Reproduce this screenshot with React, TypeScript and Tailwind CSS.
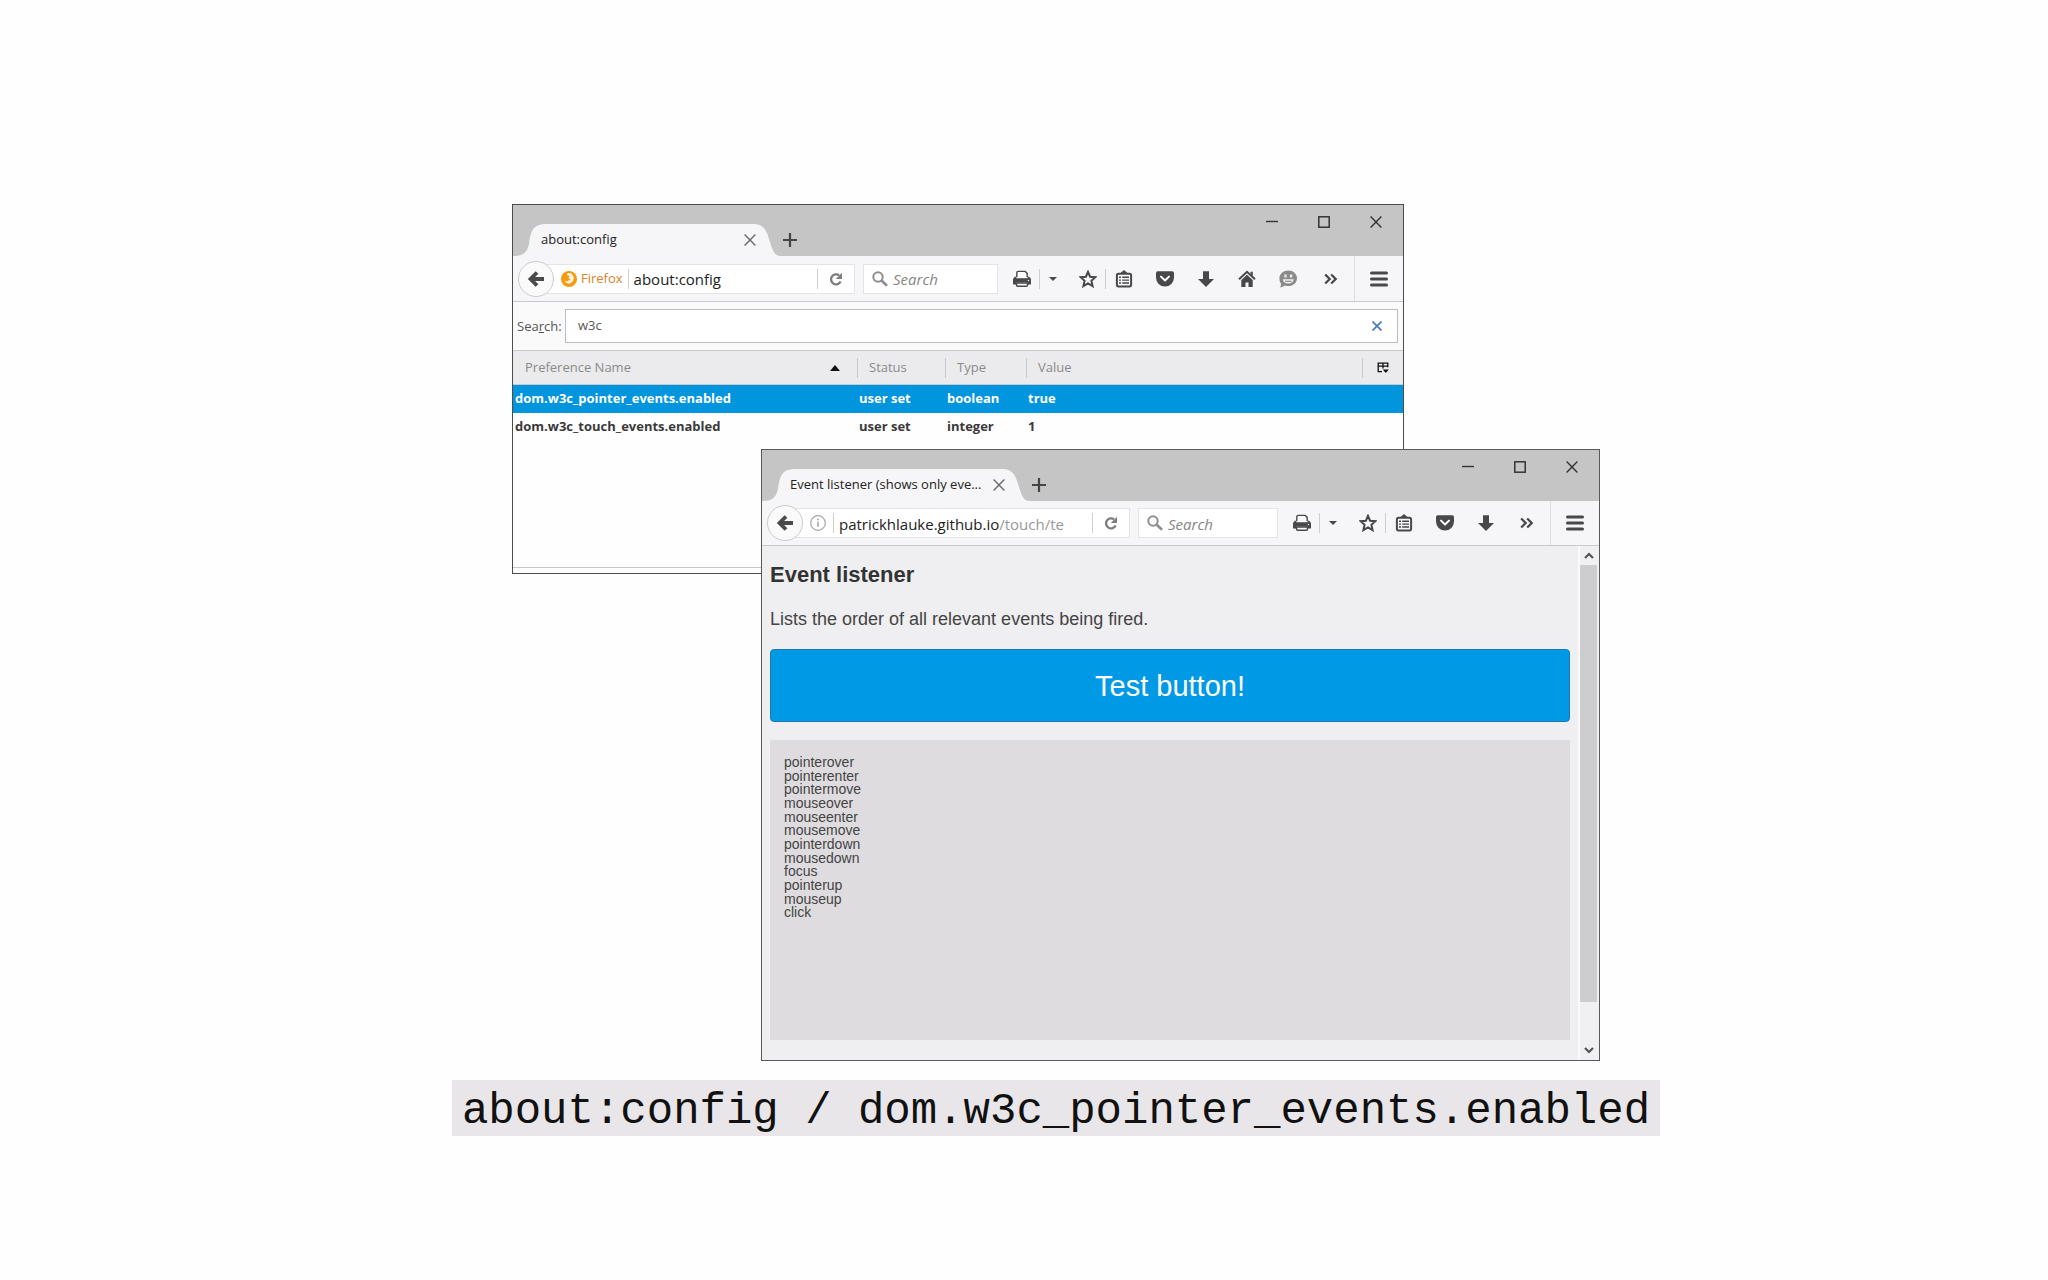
import type { ReactNode } from "react";
import clsx from "clsx";

const events = [
  "pointerover",
  "pointerenter",
  "pointermove",
  "mouseover",
  "mouseenter",
  "mousemove",
  "pointerdown",
  "mousedown",
  "focus",
  "pointerup",
  "mouseup",
  "click",
];

const prefs = [
  { name: "dom.w3c_pointer_events.enabled", status: "user set", type: "boolean", value: "true", selected: true },
  { name: "dom.w3c_touch_events.enabled", status: "user set", type: "integer", value: "1", selected: false },
];

function Svg({ size = 18, box = 18, children }: { size?: number; box?: number; children: ReactNode }) {
  return (
    <svg width={size} height={size} viewBox={`0 0 ${box} ${box}`} fill="none" aria-hidden="true" className="shrink-0">
      {children}
    </svg>
  );
}

const CloseIcon = ({ size = 12, stroke = 1.4 }: { size?: number; stroke?: number }) => (
  <Svg size={size} box={12}>
    <path d="M.6.6l10.8 10.8M11.4.6L.6 11.4" stroke="currentColor" strokeWidth={stroke} />
  </Svg>
);

const PrinterIcon = () => (
  <Svg>
    <path d="M3.8 7V2.8Q3.800 1.400 5.200 1.400h7l2 2V7" fill="#fafafa" stroke="currentColor" strokeWidth="1.4" />
    <path d="M1.8 6.800h1.600v1.400h11.200V6.800h1.600L18 9v5.600h-3v-2H3v2H0V9z" fill="currentColor" />
    <path d="M3.5 13h11v2q0 1.300-1.300 1.300H4.800q-1.300 0-1.300-1.300z" fill="#fafafa" stroke="currentColor" strokeWidth="1.5" />
    <circle cx="15.5" cy="10.5" r=".7" fill="#fff" />
  </Svg>
);

const StarIcon = () => (
  <Svg>
    <path
      d="M9 1.800l2.100 4.900 5.300.5-4 3.600 1.200 5.300L9 13.300l-4.600 2.800 1.200-5.300-4-3.600 5.300-.5z"
      stroke="currentColor"
      strokeWidth="2"
    />
  </Svg>
);

const BookmarksIcon = () => (
  <Svg>
    <rect x="1.9" y="3.7" width="14.2" height="12.7" rx="1.6" stroke="currentColor" strokeWidth="2" />
    <path d="M5 3.500L9 0l4 3.500z" fill="currentColor" />
    <path d="M4 7.200h2m1.200 0H14M4 10.100h2m1.200 0H14M4 13h2m1.200 0H14" stroke="currentColor" strokeWidth="1.4" />
  </Svg>
);

const PocketIcon = () => (
  <Svg>
    <path d="M1.800 1.200h14.400q1.800 0 1.800 1.800v4.600a9 9 0 0 1-18 0V3q0-1.800 1.800-1.800z" fill="currentColor" />
    <path d="M5 6.600l4 3.900 4-3.900" stroke="#fff" strokeWidth="2" strokeLinecap="round" strokeLinejoin="round" />
  </Svg>
);

const DownloadIcon = () => (
  <Svg>
    <path d="M6 1.200h6V9h5l-8 8-8-8h5z" fill="currentColor" />
  </Svg>
);

const HomeIcon = () => (
  <Svg>
    <path d="M1 9.300l8-7.500 8 7.500" stroke="currentColor" strokeWidth="2" />
    <path d="M12.500 1.800h2.300v4.300l-2.300-2z" fill="currentColor" />
    <path d="M3.300 10L9 4.800l5.700 5.200v7H10.500v-4.500h-3V17H3.300z" fill="currentColor" />
  </Svg>
);

const ChatIcon = () => (
  <Svg>
    <path d="M9.300.5C14.200.5 18 3.900 18 8.300s-3.800 7.800-8.700 7.800c-1.300 0-2.500-.2-3.600-.7C4.500 16.500 3 17.300.6 17.300c1-.9 1.500-2 1.500-3.400C1 12.500.4 10.500.4 8.300.4 3.900 4.400.5 9.300.5z" fill="#8a8a8a" />
    <path d="M5.300 6h2.400M10.900 6h2.400" stroke="#e8e8e8" strokeWidth="2.8" />
    <path d="M3.800 9.200h11c-.4 2.700-2.600 4.300-5.500 4.300s-5.100-1.600-5.500-4.300z" fill="#f4f4f4" />
    <path d="M6 11.300h6.600" stroke="#8a8a8a" strokeWidth="1.2" />
  </Svg>
);

const OverflowIcon = () => (
  <Svg>
    <path d="M3.200 4.500L7.700 9l-4.500 4.500M9.200 4.500l4.500 4.500-4.500 4.500" stroke="currentColor" strokeWidth="2.3" />
  </Svg>
);

const MenuIcon = () => (
  <Svg>
    <path d="M1.500 3h15M1.500 9h15M1.500 15h15" stroke="currentColor" strokeWidth="3" strokeLinecap="round" />
  </Svg>
);

const BackIcon = () => (
  <Svg>
    <path d="M17 9H4M10 2.500L3.500 9l6.500 6.500" stroke="#4a4a4c" strokeWidth="3.8" />
  </Svg>
);

const ReloadIcon = () => (
  <Svg size={14} box={14}>
    <path d="M10 3.300A5 5 0 1 0 11.600 9.600" stroke="#7d7d7f" strokeWidth="2.3" />
    <path d="M13 .8v6.200H6.800z" fill="#7d7d7f" />
  </Svg>
);

const MagnifierIcon = () => (
  <Svg size={16} box={16}>
    <circle cx="6" cy="6" r="4.7" stroke="#8f8f90" strokeWidth="2" />
    <path d="M9.500 9.500l5.500 5.300" stroke="#8f8f90" strokeWidth="2.6" />
  </Svg>
);

const FirefoxIcon = () => (
  <Svg size={16} box={16}>
    <circle cx="8" cy="8" r="8" fill="#f79a12" />
    <path d="M6.200 2.200c3.400-1 6.400 1.300 6.500 4.800.1 3.300-2.300 5.600-5 5.500-2.200-.1-3.700-1.400-4-3 1 .9 2.500 1 3.600.2 1-.6 1.700-.5 1.900-1.100.2-.7-.7-1.200-1.700-1.100-.1-1 .5-1.500 1.300-1.900-.5-.9-1.400-1.200-2.600-1z" fill="#fff3dc" />
  </Svg>
);

const InfoIcon = () => (
  <Svg size={16} box={16}>
    <circle cx="8" cy="8" r="7.3" stroke="#a5a5a6" strokeWidth="1.2" />
    <path d="M8 6.800v5" stroke="#a5a5a6" strokeWidth="1.6" />
    <circle cx="8" cy="4.5" r="1" fill="#a5a5a6" />
  </Svg>
);

const ColumnPickerIcon = () => (
  <Svg size={12} box={12}>
    <path d="M5 9.700H1.200V1.200h9.600v4M1.200 4.200h9.600M6 1v5.500" stroke="#111" strokeWidth="1.3" />
    <path d="M5.800 7.500h6L8.800 11z" fill="#111" />
  </Svg>
);

const Divider = () => <span className="h-5 w-px shrink-0 bg-[#cfced0]" />;

function ToolButton({ label, className, children }: { label: string; className?: string; children: ReactNode }) {
  return (
    <button type="button" aria-label={label} className={clsx("flex h-7 shrink-0 items-center justify-center", className)}>
      {children}
    </button>
  );
}

function TitleBar({ title }: { title: string }) {
  return (
    <div className="flex h-[51px] items-start justify-between bg-[#c6c5c6]">
      <div className="flex h-full items-end">
        <div className="relative flex h-8 w-[268px] items-center pr-[25px] pl-7">
          <svg className="absolute inset-0" width="268" height="32" viewBox="0 0 268 32" aria-hidden="true">
            <path d="M0 32C10 32 14 29 16 20C18 6 20 0 34 0H240C252 0 254 8 257 18C260 28 262 32 268 32z" fill="#f6f5f7" />
          </svg>
          <span className="relative flex-1 text-[13px] whitespace-nowrap text-[#222]">{title}</span>
          <button type="button" aria-label="Close tab" className="relative text-[#6a6a6a]">
            <CloseIcon />
          </button>
        </div>
        <button type="button" aria-label="New tab" className="mb-[9px] ml-[2px] text-[#444]">
          <Svg size={14} box={14}>
            <path d="M7 0v14M0 7h14" stroke="currentColor" strokeWidth="2.2" />
          </Svg>
        </button>
      </div>
      <div className="flex pt-[3px] pr-px text-[#333]">
        <ToolButton label="Minimize" className="w-13">
          <Svg size={12} box={12}>
            <path d="M0 5.500h12" stroke="currentColor" strokeWidth="1.4" />
          </Svg>
        </ToolButton>
        <ToolButton label="Maximize" className="w-13">
          <Svg size={12} box={12}>
            <rect x=".8" y=".8" width="10.4" height="10.4" stroke="currentColor" strokeWidth="1.5" />
          </Svg>
        </ToolButton>
        <ToolButton label="Close window" className="w-13">
          <CloseIcon />
        </ToolButton>
      </div>
    </div>
  );
}

type ToolbarProps = {
  identity: ReactNode;
  host: string;
  path?: string;
  searchWidth: string;
  className: string;
  extra?: ReactNode;
};

function Toolbar({ identity, host, path, searchWidth, className, extra }: ToolbarProps) {
  return (
    <div className={clsx("flex items-center border-b border-[#c9c8ca] bg-[#f6f5f7] pl-[5px] text-[#48484a]", className)}>
      <button
        type="button"
        aria-label="Back"
        className="relative flex size-9 shrink-0 items-center justify-center rounded-full border border-[#cbcacc] bg-[#fafafb]"
      >
        <BackIcon />
      </button>
      <div className="-ml-2 flex h-[30px] min-w-0 flex-1 items-center border border-[#e4e3e5] bg-white pl-[14px]">
        {identity}
        <Divider />
        <div className="flex min-w-0 flex-1 items-center overflow-hidden pt-[2px] pl-[5px] text-[15px]">
          <input aria-label="Address" defaultValue={host} className="text-[#222] outline-none [field-sizing:content]" />
          {path && <span className="text-[#999]">{path}</span>}
        </div>
        <Divider />
        <ToolButton label="Reload" className="w-9">
          <ReloadIcon />
        </ToolButton>
      </div>
      <label className={clsx("ml-2 flex h-[30px] shrink-0 items-center gap-[5px] border border-[#e4e3e5] bg-white pl-2", searchWidth)}>
        <MagnifierIcon />
        <input
          aria-label="Web search"
          placeholder="Search"
          className="min-w-0 flex-1 pt-[2px] text-[15px] italic outline-none placeholder:text-[#858585]"
        />
      </label>
      <ToolButton label="Print" className="ml-[7px] w-[34px]">
        <PrinterIcon />
      </ToolButton>
      <Divider />
      <ToolButton label="Print options" className="w-[25px]">
        <Svg size={8} box={8}>
          <path d="M0 2h8L4 6z" fill="currentColor" />
        </Svg>
      </ToolButton>
      <ToolButton label="Bookmark this page" className="ml-[6px] w-[34px]">
        <StarIcon />
      </ToolButton>
      <Divider />
      <ToolButton label="Bookmarks" className="mr-[2px] w-9">
        <BookmarksIcon />
      </ToolButton>
      <ToolButton label="Save to Pocket" className="w-[41px]">
        <PocketIcon />
      </ToolButton>
      <ToolButton label="Downloads" className="w-[41px]">
        <DownloadIcon />
      </ToolButton>
      {extra}
      <ToolButton label="More tools" className="mr-[3px] w-[41px]">
        <OverflowIcon />
      </ToolButton>
      <div className="flex h-full border-l border-[#dddcde]">
        <button type="button" aria-label="Menu" className="flex w-12 items-center justify-center">
          <MenuIcon />
        </button>
      </div>
    </div>
  );
}

function ConfigWindow() {
  return (
    <section className="absolute top-0 left-0 flex h-[370px] w-[892px] flex-col border border-[#4c4c4c] bg-[#fefefe]">
      <TitleBar title="about:config" />
      <Toolbar
        className="h-[46px]"
        searchWidth="w-[135px]"
        host="about:config"
        identity={
          <span className="mr-[5px] flex items-center gap-1 text-[13px] text-[#d9822b]">
            <FirefoxIcon />
            Firefox
          </span>
        }
        extra={
          <>
            <ToolButton label="Home" className="w-[41px]">
              <HomeIcon />
            </ToolButton>
            <ToolButton label="Chat" className="mr-[2px] w-[41px]">
              <ChatIcon />
            </ToolButton>
          </>
        }
      />

      {/* Filter row */}
      <div className="flex h-12 items-center bg-[#fbfafb] pr-[5px] pl-1 text-[13px] text-[#555]">
        <label htmlFor="filter" className="w-12 pt-px">
          Sea<u>r</u>ch:
        </label>
        <div className="flex h-[34px] flex-1 items-center border border-[#bdbcc0] bg-white pr-[15px] pl-3">
          <input id="filter" defaultValue="w3c" className="flex-1 outline-none" />
          <button type="button" aria-label="Clear filter" className="text-[#4679bd]">
            <CloseIcon size={10} stroke={2} />
          </button>
        </div>
      </div>

      {/* Preferences */}
      <table className="w-full table-fixed border-collapse text-left text-[13px]">
        <thead>
          <tr className="h-[34px] border-y border-[#c9c8ca] bg-[#ebeaec] text-[#8a8a8a]">
            <th className="w-[345px] pl-3 font-normal">
              <div className="flex h-5 items-center justify-between border-r border-[#c9c8ca] pr-[17px]">
                Preference Name
                <Svg size={10} box={10}>
                  <path d="M0 8L5 2l5 6z" fill="#111" />
                </Svg>
              </div>
            </th>
            <th className="w-[88px] pl-[11px] font-normal">
              <div className="flex h-5 items-center border-r border-[#c9c8ca]">Status</div>
            </th>
            <th className="w-[81px] pl-[11px] font-normal">
              <div className="flex h-5 items-center border-r border-[#c9c8ca]">Type</div>
            </th>
            <th className="pl-[11px] font-normal">
              <div className="flex h-5 items-center border-r border-[#c9c8ca]">Value</div>
            </th>
            <th className="w-10">
              <button type="button" aria-label="Select columns" className="flex w-full justify-center">
                <ColumnPickerIcon />
              </button>
            </th>
          </tr>
        </thead>
        <tbody>
          {prefs.map((pref) => (
            <tr
              key={pref.name}
              className={clsx("h-7 font-bold", pref.selected ? "bg-[#0095dd] text-white" : "text-[#3a3a3a]")}
            >
              <td className="pl-[2px]">{pref.name}</td>
              <td className="pl-px">{pref.status}</td>
              <td className="pl-px">{pref.type}</td>
              <td className="pl-px" colSpan={2}>
                {pref.value}
              </td>
            </tr>
          ))}
        </tbody>
      </table>
      <div className="mt-auto mb-[5px] border-b border-[#c4c9c6]" />
    </section>
  );
}

function EventWindow() {
  return (
    <section className="absolute right-0 bottom-0 flex h-[612px] w-[839px] flex-col border border-[#5a585c] bg-[#efeef0]">
      <TitleBar title="Event listener (shows only eve..." />
      <Toolbar
        className="h-[45px]"
        searchWidth="w-[140px]"
        host="patrickhlauke.github.io"
        path="/touch/te"
        identity={
          <span className="mr-[7px]">
            <InfoIcon />
          </span>
        }
      />
      <div className="flex min-h-0 flex-1 font-['Liberation_Sans',Arial,sans-serif] text-[#444]">
        <div className="flex flex-1 flex-col px-2 pt-[15px] pb-5">
          <h1 className="text-[22px] leading-7 font-bold text-[#333]">Event listener</h1>
          <p className="mt-4 text-lg leading-7">Lists the order of all relevant events being fired.</p>
          <button
            type="button"
            className="mt-4 h-[73px] shrink-0 rounded border border-[#1a78b4] bg-[#0099e6] pt-[2px] text-[29px] text-white"
          >
            Test button!
          </button>
          <div className="mt-[18px] flex-1 bg-[#dedcdf] px-[14px] py-[15px]">
            <ul className="grid h-[164px] auto-rows-fr text-[14px] leading-none">
              {events.map((event) => (
                <li key={event}>{event}</li>
              ))}
            </ul>
          </div>
        </div>
        {/* Scrollbar */}
        <div className="flex w-[21px] flex-col border-l-2 border-[#fafafa] bg-[#f0eff1] pr-[2px] text-[#555]">
          <ToolButton label="Scroll up" className="h-[19px]!">
            <Svg size={10} box={10}>
              <path d="M1 7l4-4 4 4" stroke="currentColor" strokeWidth="2.2" />
            </Svg>
          </ToolButton>
          <div className="h-[437px] bg-[#cdccce]" />
          <ToolButton label="Scroll down" className="mt-auto h-5!">
            <Svg size={10} box={10}>
              <path d="M1 3l4 4 4-4" stroke="currentColor" strokeWidth="2.2" />
            </Svg>
          </ToolButton>
        </div>
      </div>
    </section>
  );
}

export default function App() {
  return (
    <main className="flex min-h-screen flex-col items-center bg-[#fefefe] pt-[204px] pl-16 font-['Open_Sans','Noto_Sans',sans-serif]">
      <div className="relative h-[857px] w-[1088px]">
        <ConfigWindow />
        <EventWindow />
      </div>
      <p className="mt-[19px] bg-[#e8e6e8] px-[10px] pt-[6px] font-['Liberation_Mono',monospace] text-[44px] leading-[50px] text-[#111]">
        about:config / dom.w3c_pointer_events.enabled
      </p>
    </main>
  );
}
